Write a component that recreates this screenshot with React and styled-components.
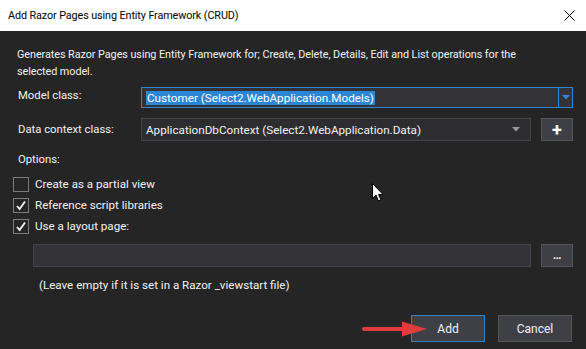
import React from "react";
import styled, { createGlobalStyle } from "styled-components";

const Global = createGlobalStyle`
  html, body { margin: 0; padding: 0; background: #252526; }
  body { font-family: Roboto, "Noto Sans", sans-serif; }
  * { box-sizing: border-box; }
`;

const Window = styled.div`
  position: relative;
  width: 586px;
  height: 349px;
  background: #252526;
  color: #f1f1f1;
  font-size: 11.6px;
  display: flex;
  flex-direction: column;
  overflow: hidden;
`;

const TitleBar = styled.div`
  height: 31px;
  background: #ffffff;
  color: #000;
  display: flex;
  align-items: center;
  justify-content: space-between;
  padding: 0 0 0 8px;
  font-size: 10.8px;
  letter-spacing: -0.1px;
`;

const CloseBtn = styled.div`
  width: 34px;
  height: 31px;
  display: flex;
  align-items: center;
  justify-content: center;
`;

const Body = styled.div`
  flex: 1;
  display: flex;
  flex-direction: column;
  padding: 15px 13px 0 17px;
`;

const Description = styled.div`
  max-width: 500px;
  line-height: 17px;
  font-size: 10.8px;
  letter-spacing: -0.05px;
  color: #f1f1f1;
`;

const FormGrid = styled.div`
  display: grid;
  grid-template-columns: 124px 1fr;
  row-gap: 10px;
  margin-top: 7px;
  align-items: center;
`;

const Label = styled.div`
  padding-left: 1px;
  line-height: 16px;
  font-size: 11.3px;
  align-self: ${(p) => (p.$top ? "start" : "center")};
  margin-top: ${(p) => (p.$top ? "1px" : "0")};
`;

const ControlRow = styled.div`
  display: flex;
  gap: 10px;
  align-items: stretch;
`;

const Combo = styled.div`
  flex: 1;
  height: ${(p) => p.$h}px;
  display: flex;
  align-items: center;
  background: ${(p) => (p.$active ? "#333337" : "#2d2d30")};
  border: 1px solid ${(p) => (p.$active ? "#2f86d6" : "#434346")};
  padding-left: 3px;
  font-size: 11.7px;
`;

const Highlight = styled.span`
  background: #2a86d4;
  color: #fff;
  padding: 0 1px;
  line-height: 16px;
`;

const ComboText = styled.span`
  flex: 1;
  color: #f1f1f1;
  padding-left: 1px;
`;

const ArrowBox = styled.div`
  width: ${(p) => (p.$sep ? 14 : 28)}px;
  align-self: stretch;
  display: flex;
  align-items: center;
  justify-content: center;
  border-left: ${(p) => (p.$sep ? "1px solid #2f86d6" : "none")};
`;

const SquareButton = styled.div`
  width: 32px;
  height: 23px;
  background: #3f3f46;
  border: 1px solid #555559;
  display: flex;
  align-items: center;
  justify-content: center;
  color: #fff;
  font-size: ${(p) => p.$fs || 12}px;
  font-weight: bold;
  letter-spacing: ${(p) => p.$ls || 0}px;
`;

const OptionsLabel = styled.div`
  margin-top: 11px;
  padding-left: 1px;
  line-height: 16px;
  font-size: 11.3px;
`;

const CheckList = styled.div`
  display: flex;
  flex-direction: column;
  gap: 6px;
  margin-top: 9px;
  margin-left: -4px;
`;

const CheckRow = styled.label`
  display: flex;
  align-items: center;
  gap: 6px;
  height: 15px;
  line-height: 15px;
`;

const Box = styled.span`
  width: 16px;
  height: 15px;
  border: 1px solid #7a7a7e;
  background: #252526;
  display: flex;
  align-items: center;
  justify-content: center;
`;

const PathRow = styled.div`
  display: flex;
  gap: 10px;
  margin-top: 10px;
  margin-left: 16px;
  height: 23px;
`;

const PathInput = styled.div`
  flex: 1;
  background: #333337;
  border: 1px solid #434346;
`;

const Note = styled.div`
  margin-top: 10px;
  margin-left: 22px;
  line-height: 16px;
`;

const Footer = styled.div`
  margin-top: auto;
  display: flex;
  justify-content: flex-end;
  gap: 13px;
  padding: 0 1px 7px 0;
`;

const Button = styled.div`
  width: 74px;
  height: 27px;
  background: #3f3f46;
  border: 1px solid ${(p) => (p.$primary ? "#2f7fc4" : "#555559")};
  color: #f1f1f1;
  display: flex;
  align-items: center;
  justify-content: center;
  font-size: 12px;
`;

const Overlay = styled.svg`
  position: absolute;
  left: ${(p) => p.$x}px;
  top: ${(p) => p.$y}px;
  pointer-events: none;
`;

const Check = () => (
  <svg width="12" height="11" viewBox="0 0 12 11">
    <path d="M2 6 L4.6 9 L10 1.5" stroke="#f1f1f1" strokeWidth="1.9" fill="none" />
  </svg>
);

const Caret = ({ color }) => (
  <svg width="8" height="5" viewBox="0 0 8 5">
    <path d="M0 0 H8 L4 4.5 Z" fill={color} />
  </svg>
);

export default function App() {
  return (
    <Window>
      <Global />
      <TitleBar>
        <span>Add Razor Pages using Entity Framework (CRUD)</span>
        <CloseBtn>
          <svg width="11" height="11" viewBox="0 0 11 11">
            <path d="M0.5 0.5 L10.5 10.5 M10.5 0.5 L0.5 10.5" stroke="#000" strokeWidth="1" />
          </svg>
        </CloseBtn>
      </TitleBar>
      <Body>
        <Description>
          Generates Razor Pages using Entity Framework for; Create, Delete, Details, Edit and List operations for the
          selected model.
        </Description>
        <FormGrid>
          <Label $top>Model class:</Label>
          <ControlRow>
            <Combo $active $h={21}>
              <ComboText>
                <Highlight>Customer (Select2.WebApplication.Models)</Highlight>
              </ComboText>
              <ArrowBox $sep>
                <Caret color="#2f86d6" />
              </ArrowBox>
            </Combo>
          </ControlRow>
          <Label>Data context class:</Label>
          <ControlRow>
            <Combo $h={23}>
              <ComboText>ApplicationDbContext (Select2.WebApplication.Data)</ComboText>
              <ArrowBox>
                <Caret color="#9a9a9a" />
              </ArrowBox>
            </Combo>
            <SquareButton $fs={18}>+</SquareButton>
          </ControlRow>
        </FormGrid>
        <OptionsLabel>Options:</OptionsLabel>
        <CheckList>
          <CheckRow>
            <Box />
            Create as a partial view
          </CheckRow>
          <CheckRow>
            <Box>
              <Check />
            </Box>
            Reference script libraries
          </CheckRow>
          <CheckRow>
            <Box>
              <Check />
            </Box>
            Use a layout page:
          </CheckRow>
        </CheckList>
        <PathRow>
          <PathInput />
          <SquareButton $fs={11} $ls={-0.5}>...</SquareButton>
        </PathRow>
        <Note>(Leave empty if it is set in a Razor _viewstart file)</Note>
        <Footer>
          <Button $primary>Add</Button>
          <Button>Cancel</Button>
        </Footer>
      </Body>
      <Overlay $x={362} $y={320} width="68" height="18" viewBox="0 0 68 18">
        <path d="M2 9 H44" stroke="#e03c3c" strokeWidth="4" strokeLinecap="round" />
        <path d="M40 1.5 L65 9 L40 16.5 Z" fill="#e03c3c" />
      </Overlay>
      <Overlay $x={372} $y={183} width="12" height="19" viewBox="0 0 12 19">
        <path d="M0.5 0.5 V15.5 L4 12 L6.5 18 L9 17 L6.5 11.5 L11 11.5 Z" fill="#fff" stroke="#000" strokeWidth="1" />
      </Overlay>
    </Window>
  );
}
